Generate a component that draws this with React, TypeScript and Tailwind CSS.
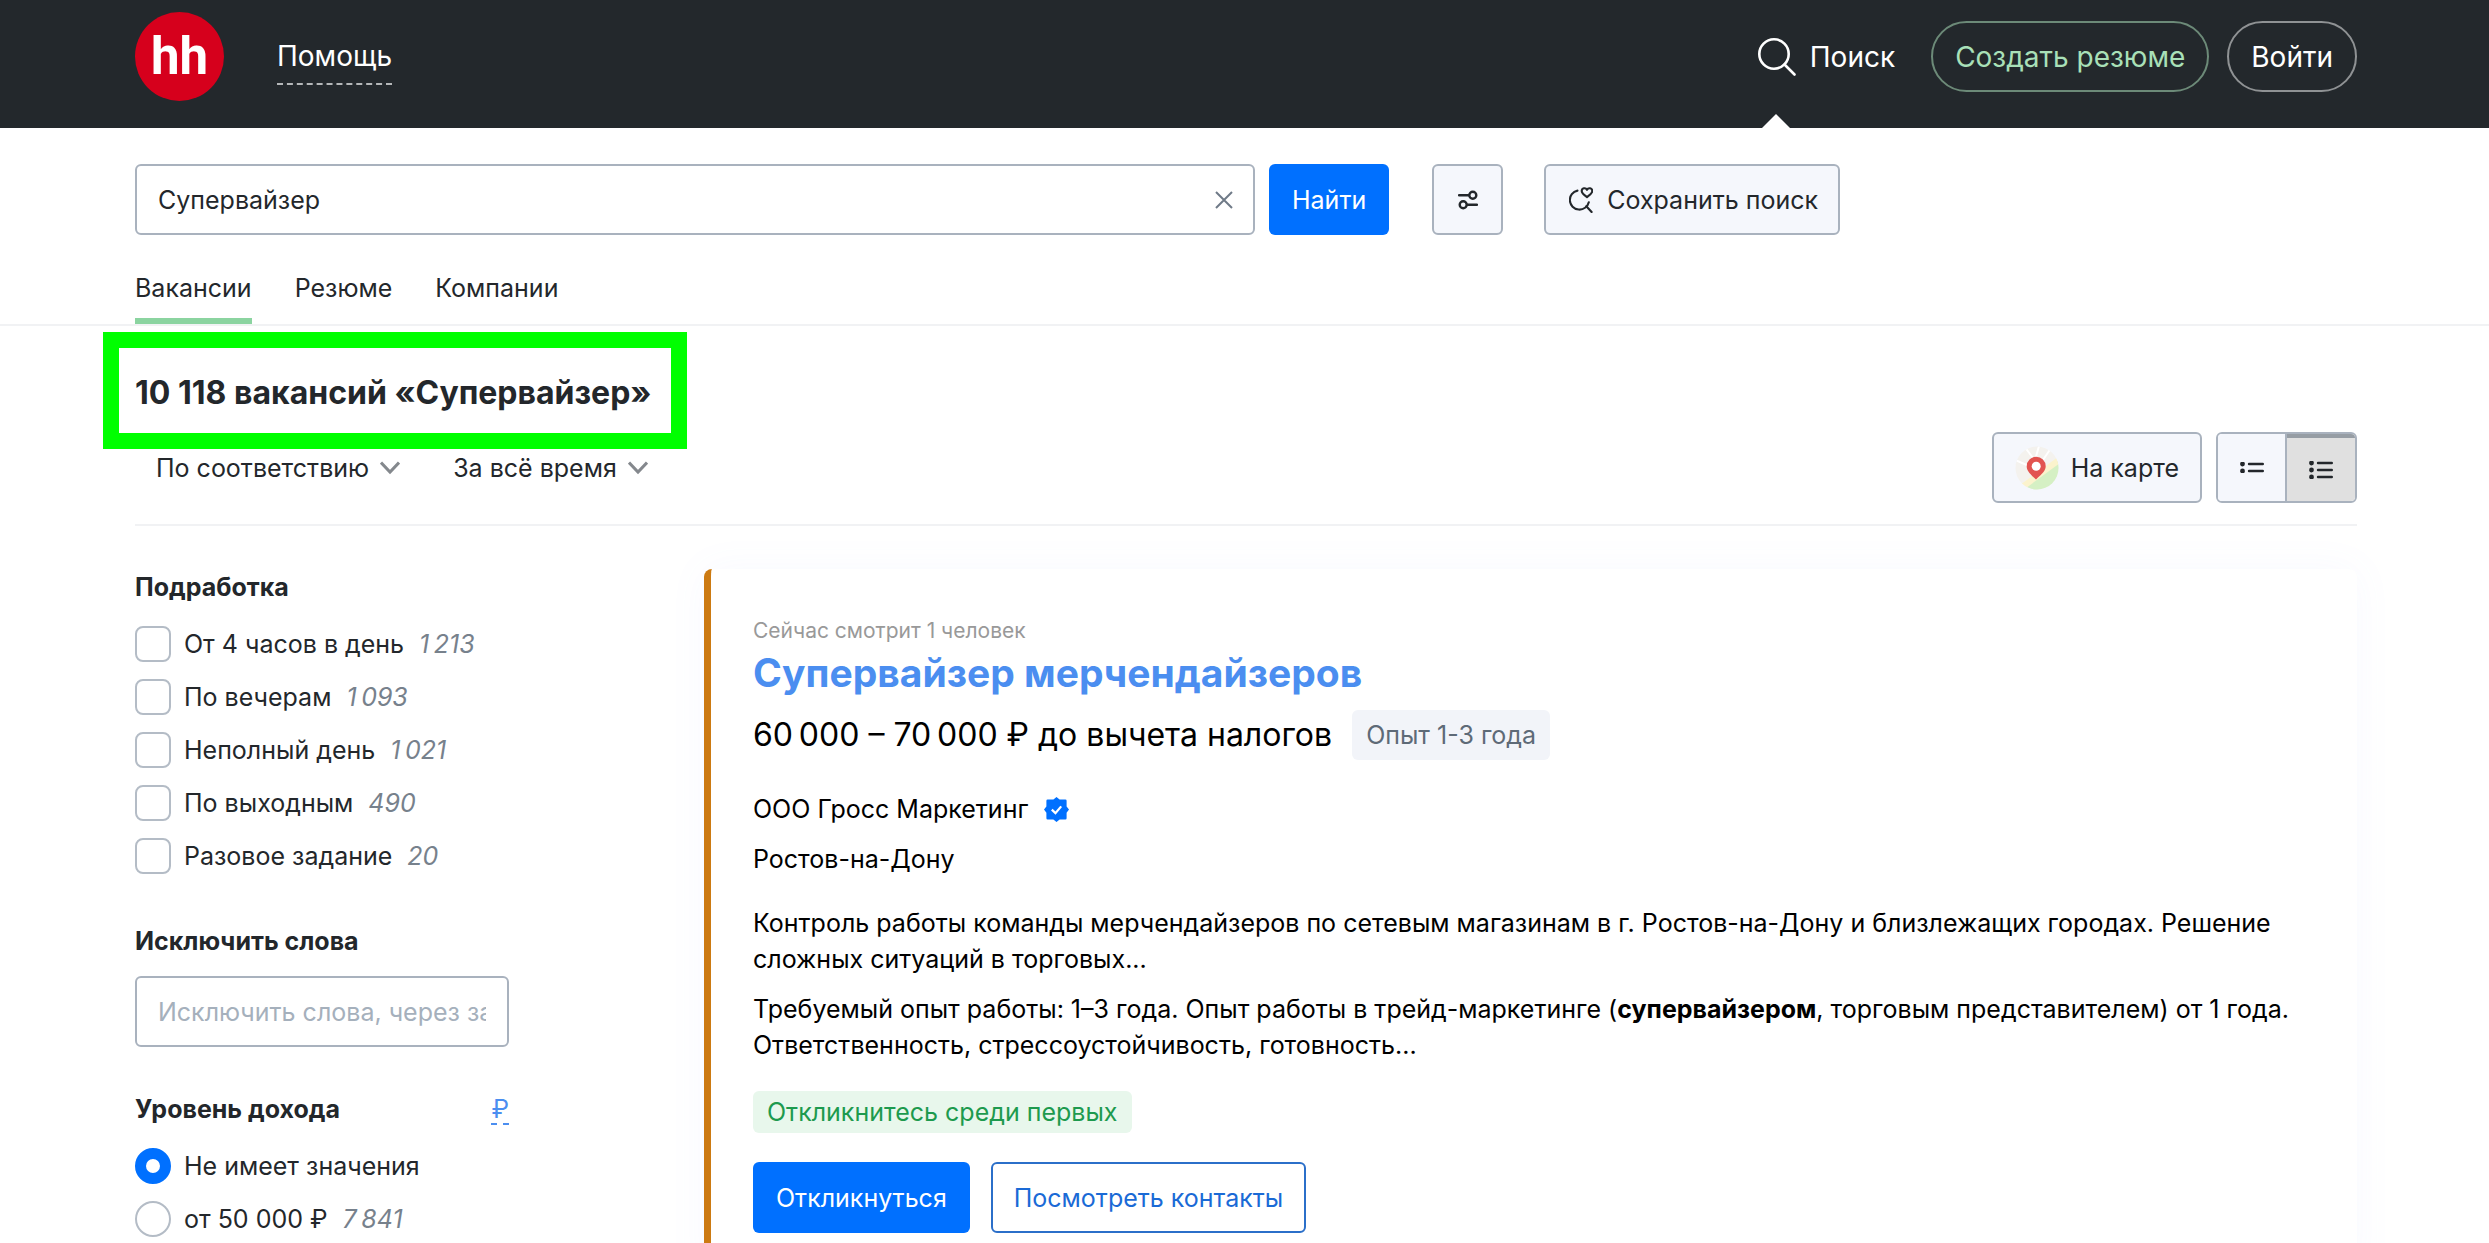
import { useState } from "react";

type Filter = { label: string; count?: string };

const partTime: Filter[] = [
  { label: "От 4 часов в день", count: "1\u2009213" },
  { label: "По вечерам", count: "1\u2009093" },
  { label: "Неполный день", count: "1\u2009021" },
  { label: "По выходным", count: "490" },
  { label: "Разовое задание", count: "20" },
];

const income: Filter[] = [
  { label: "Не имеет значения" },
  { label: "от 50\u00a0000 ₽", count: "7\u2009841" },
];

const tabs = ["Вакансии", "Резюме", "Компании"];

const ChevronIcon = () => (
  <svg
    viewBox="0 0 20 14"
    className="pointer-events-none h-[14px] w-5"
    fill="none"
    stroke="#84888d"
    strokeWidth="3"
  >
    <path d="M1 1.5 10 11 19 1.5" />
  </svg>
);

const SearchIcon = () => (
  <svg
    viewBox="0 0 38 38"
    className="size-[38px]"
    fill="none"
    stroke="#fff"
    strokeWidth="2.6"
    strokeLinecap="round"
  >
    <circle cx="16" cy="16" r="14.7" />
    <path d="M26.5 26.5 36.5 36.5" />
  </svg>
);

const FiltersIcon = () => (
  <svg
    viewBox="0 0 20 20"
    className="size-5"
    fill="none"
    stroke="#23272b"
    strokeWidth="2.4"
  >
    <path d="M1 5.2H10.5M9.5 14.8H19" strokeLinecap="round" />
    <circle cx="14.8" cy="5.2" r="3.5" />
    <circle cx="5.2" cy="14.8" r="3.5" />
  </svg>
);

const SaveSearchIcon = () => (
  <svg
    viewBox="0 0 24 26"
    className="h-[26px] w-6"
    fill="none"
    stroke="#23272b"
    strokeWidth="2.1"
    strokeLinecap="round"
    strokeLinejoin="round"
  >
    <path d="M8.5 3.6A9.6 9.6 0 1 0 19.8 15.2" />
    <path d="M17.3 19.2 22.6 25" />
    <path d="M18 10.2C15.2 8.2 12.7 6.400 12.700 4.100c0-3.200 4-3.900 5.300-1.300 1.300-2.600 5.300-1.900 5.300 1.300 0 2.300-2.500 4.100-5.300 6.100Z" />
  </svg>
);

const MapIcon = () => (
  <svg viewBox="0 0 44 44" className="size-11">
    <clipPath id="map-circle">
      <circle cx="22" cy="22" r="21.5" />
    </clipPath>
    <g clipPath="url(#map-circle)">
      <rect width="44" height="44" fill="#f4f2ee" />
      <path d="M9 0 18 12M24 0 20 14M0 14 14 20M36 2 28 14" stroke="#fff" strokeWidth="2" />
      <path d="M44 14 8 44H44Z" fill="#d5f0c4" />
      <path d="M44 14 6 42" stroke="#fbf3cd" strokeWidth="6" />
    </g>
    <path
      d="M21 33.5C14.5 27.5 11.7 24.6 11.7 20.3a9.5 9.5 0 0 1 19 0C30.7 24.6 27.5 27.5 21 33.5Z"
      fill="#e25450"
    />
    <circle cx="21.2" cy="20.3" r="4.5" fill="#fff" />
  </svg>
);

const ListIcon: React.FC<{ rows: number[]; height: number }> = ({ rows, height }) => (
  <svg
    viewBox={`0 0 24 ${height}`}
    className="w-6"
    stroke="#23272b"
    strokeWidth="2.4"
    strokeLinecap="round"
  >
    {rows.map((y) => (
      <g key={y}>
        <circle cx="2.5" cy={y} r="1.2" fill="#23272b" />
        <path d={`M9 ${y}H22.8`} />
      </g>
    ))}
  </svg>
);

const VerifiedIcon = () => (
  <svg viewBox="0 0 24 24" className="size-[25px]">
    <path
      d="M12 0 15 2.300H20.500A1.200 1.200 0 0 1 21.700 3.500V9L24 12 21.700 15V20.500A1.200 1.200 0 0 1 20.500 21.700H15L12 24 9 21.700H3.500A1.200 1.200 0 0 1 2.300 20.500V15L0 12 2.300 9V3.500A1.200 1.200 0 0 1 3.500 2.300H9Z"
      fill="#0070ff"
    />
    <path d="M7.5 12.2 11 15.5 16.5 9" fill="none" stroke="#fff" strokeWidth="2.2" />
  </svg>
);

const Header = () => (
  <header className="flex h-32 items-start justify-between bg-[#23282c] pr-[132px] pl-[135px] text-[28px] leading-9 text-white">
    <div className="flex items-center gap-[53px] pt-3">
      <a
        href="#"
        aria-label="hh.ru"
        className="flex size-[89px] items-center justify-center rounded-full bg-[#d6001c] font-[Roboto] text-[51px] font-bold"
      >
        hh
      </a>
      <a href="#" className="border-b-2 border-dashed border-[#b4b7b9] pt-[10px] pb-[9px]">
        Помощь
      </a>
    </div>
    <div className="flex pt-[21px]">
      <a href="#" className="relative mr-9 h-[107px]">
        <span className="flex h-[71px] items-center gap-[14px]">
          <SearchIcon />
          Поиск
        </span>
        <svg viewBox="0 0 28 14" className="absolute bottom-0 left-1 w-7" fill="#fff">
          <path d="M14 0 28 14H0Z" />
        </svg>
      </a>
      <button className="mr-[18px] h-[71px] rounded-full border-2 border-[#6c8a78] px-[22px] text-[#a9e0b8]">
        Создать резюме
      </button>
      <button className="h-[71px] rounded-full border-2 border-[#8f9294] px-[22px]">Войти</button>
    </div>
  </header>
);

const SearchBar = () => {
  const [query, setQuery] = useState<string>("Супервайзер");

  return (
    <form className="flex" onSubmit={(e) => e.preventDefault()}>
      <div className="mr-[14px] flex h-[71px] w-[1120px] items-center rounded-md border-2 border-[#a9b2be] pr-5 pl-[21px]">
        <input
          aria-label="Поиск вакансий"
          className="min-w-0 flex-1 outline-none"
          value={query}
          onChange={(e) => setQuery(e.target.value)}
        />
        <button type="button" aria-label="Очистить" onClick={() => setQuery("")}>
          <svg viewBox="0 0 18 18" className="size-[18px]" stroke="#6f7a87" strokeWidth="2">
            <path d="M1 1 17 17M17 1 1 17" />
          </svg>
        </button>
      </div>
      <button className="mr-[43px] h-[71px] rounded-md bg-[#0070ff] px-[23px] text-white">
        Найти
      </button>
      <button
        type="button"
        aria-label="Расширенный поиск"
        className="mr-[41px] flex size-[71px] items-center justify-center rounded-md border-2 border-[#a9b2be] bg-[#f5f7fc]"
      >
        <FiltersIcon />
      </button>
      <button
        type="button"
        className="flex h-[71px] items-center gap-[14px] rounded-md border-2 border-[#a9b2be] bg-[#f5f7fc] pr-5 pl-[23px]"
      >
        <SaveSearchIcon />
        Сохранить поиск
      </button>
    </form>
  );
};

const SortSelect: React.FC<{ label: string; value: string }> = ({ label, value }) => (
  <span className="flex items-center gap-[11px]">
    <select
      aria-label={label}
      className="field-sizing-content appearance-none bg-transparent outline-none"
    >
      <option>{value}</option>
    </select>
    <ChevronIcon />
  </span>
);

const Toolbar = () => (
  <div className="flex items-center justify-between border-b-2 border-[#f1f2f4] pb-[21px]">
    <div className="flex gap-[53px] pl-[21px]">
      <SortSelect label="Сортировка" value="По соответствию" />
      <SortSelect label="Период" value="За всё время" />
    </div>
    <div className="flex gap-[14px]">
      <button className="flex h-[71px] items-center gap-3 rounded-md border-2 border-[#a9b2be] bg-[#f5f7fc] px-[21px]">
        <MapIcon />
        На карте
      </button>
      <div className="flex h-[71px] overflow-hidden rounded-md border-2 border-[#a9b2be]">
        <button
          aria-label="Кратко"
          className="flex w-[69px] items-center justify-center border-r-2 border-[#a9b2be] bg-[#f5f7fc]"
        >
          <ListIcon rows={[2, 9]} height={11} />
        </button>
        <button
          aria-label="Подробно"
          className="flex w-[68px] items-center justify-center border-t-4 border-[#969da4] bg-[#e0e0e0]"
        >
          <ListIcon rows={[2, 9, 16]} height={18} />
        </button>
      </div>
    </div>
  </div>
);

const FilterRow: React.FC<{
  item: Filter;
  type: "checkbox" | "radio";
  defaultChecked?: boolean;
}> = ({ item, type, defaultChecked }) => (
  <label className="flex items-center">
    <input
      type={type}
      name={type === "radio" ? "income" : item.label}
      defaultChecked={defaultChecked}
      className={
        type === "radio"
          ? "mr-[13px] size-9 appearance-none rounded-full border-2 border-[#b4bcc6] checked:border-[11px] checked:border-[#0070ff]"
          : "mr-[13px] size-9 appearance-none rounded-lg border-2 border-[#b4bcc6] checked:bg-[#0070ff]"
      }
    />
    {item.label}
    {item.count && <span className="ml-[15px] text-[#77818c] italic">{item.count}</span>}
  </label>
);

const Sidebar = () => (
  <aside className="w-[374px] shrink-0">
    <fieldset className="flex flex-col gap-[17px]">
      <legend className="mb-[21px] font-bold">Подработка</legend>
      {partTime.map((item) => (
        <FilterRow key={item.label} item={item} type="checkbox" />
      ))}
    </fieldset>
    <label className="mt-[49px] block">
      <span className="block pb-[17px] font-bold">Исключить слова</span>
      <input
        placeholder="Исключить слова, через запятую"
        className="h-[71px] w-full rounded-md border-2 border-[#a9b2be] px-[21px] outline-none placeholder:text-[#a5b0bc]"
      />
    </label>
    <div className="mt-[44px] flex items-baseline justify-between">
      <h3 className="font-bold">Уровень дохода</h3>
      <a href="#" className="border-b-2 border-dashed border-[#4b8ef0] leading-7 text-[#4b8ef0]">
        ₽
      </a>
    </div>
    <div className="mt-[21px] flex flex-col gap-[17px]">
      {income.map((item, i) => (
        <FilterRow key={item.label} item={item} type="radio" defaultChecked={i === 0} />
      ))}
    </div>
  </aside>
);

const VacancyCard = () => (
  <article className="flex-1 rounded-lg border-l-[7px] border-[#cc7a12] pt-[44px] pr-[42px] pb-[42px] pl-[42px] text-black shadow-[0_0_40px_rgba(112,146,254,0.05)]">
    <p className="text-[21px] text-[#999]">Сейчас смотрит 1 человек</p>
    <h2 className="text-[39px] leading-[48px] font-bold text-[#4b8ef0]">
      <a href="#">Супервайзер мерчендайзеров</a>
    </h2>
    <div className="mt-[13px] flex items-center gap-5">
      <span className="text-[32px]">60{"\u2009"}000 – 70{"\u2009"}000 ₽ до вычета налогов</span>
      <span className="rounded-md bg-[#f2f4f9] px-[14px] py-[7px] text-[#5e6a77]">
        Опыт 1-3 года
      </span>
    </div>
    <div className="mt-[31px] flex items-center gap-4">
      <a href="#">ООО Гросс Маркетинг</a>
      <VerifiedIcon />
    </div>
    <p className="mt-[14px]">Ростов-на-Дону</p>
    <p className="mt-7">
      Контроль работы команды мерчендайзеров по сетевым магазинам в г. Ростов-на-Дону и
      близлежащих городах. Решение сложных ситуаций в торговых...
    </p>
    <p className="mt-[14px]">
      Требуемый опыт работы: 1–3 года. Опыт работы в трейд-маркетинге (<b>супервайзером</b>,
      торговым представителем) от 1 года. Ответственность, стрессоустойчивость, готовность...
    </p>
    <div className="mt-7 flex">
      <span className="rounded-md bg-[#e8f7ec] px-[14px] py-[3px] text-[#1d9a4e]">
        Откликнитесь среди первых
      </span>
    </div>
    <div className="mt-[29px] flex gap-[21px]">
      <button className="h-[71px] rounded-md bg-[#0070ff] px-[23px] text-white">
        Откликнуться
      </button>
      <button className="h-[71px] rounded-md border-2 border-[#2b6fc9] px-[21px] text-[#1a6ad6]">
        Посмотреть контакты
      </button>
    </div>
  </article>
);

const App = () => {
  return (
    <div className="min-h-screen bg-white font-[Inter,sans-serif] text-[25px] leading-9 text-[#23272b]">
      <Header />
      <div className="border-b-2 border-[#f1f2f4] pt-9 pr-[132px] pl-[135px]">
        <SearchBar />
        <nav className="mt-[35px] flex gap-[43px]">
          {tabs.map((tab, i) => (
            <a
              key={tab}
              href="#"
              className={
                i === 0
                  ? "border-b-[6px] border-[#8bd4a0] pb-3"
                  : "border-b-[6px] border-transparent pb-3"
              }
            >
              {tab}
            </a>
          ))}
        </nav>
      </div>
      <main className="pt-[47px] pr-[132px] pl-[135px]">
        <div className="mb-[19px] flex">
          <h1 className="relative text-[32px] leading-10 font-bold">
            10 118 вакансий «Супервайзер»
            <span className="pointer-events-none absolute -top-[41px] -right-9 -bottom-9 -left-8 border-16 border-[#00ff00]" />
          </h1>
        </div>
        <Toolbar />
        <div className="mt-[43px] flex items-stretch gap-[195px]">
          <Sidebar />
          <VacancyCard />
        </div>
      </main>
    </div>
  );
};

export default App;
